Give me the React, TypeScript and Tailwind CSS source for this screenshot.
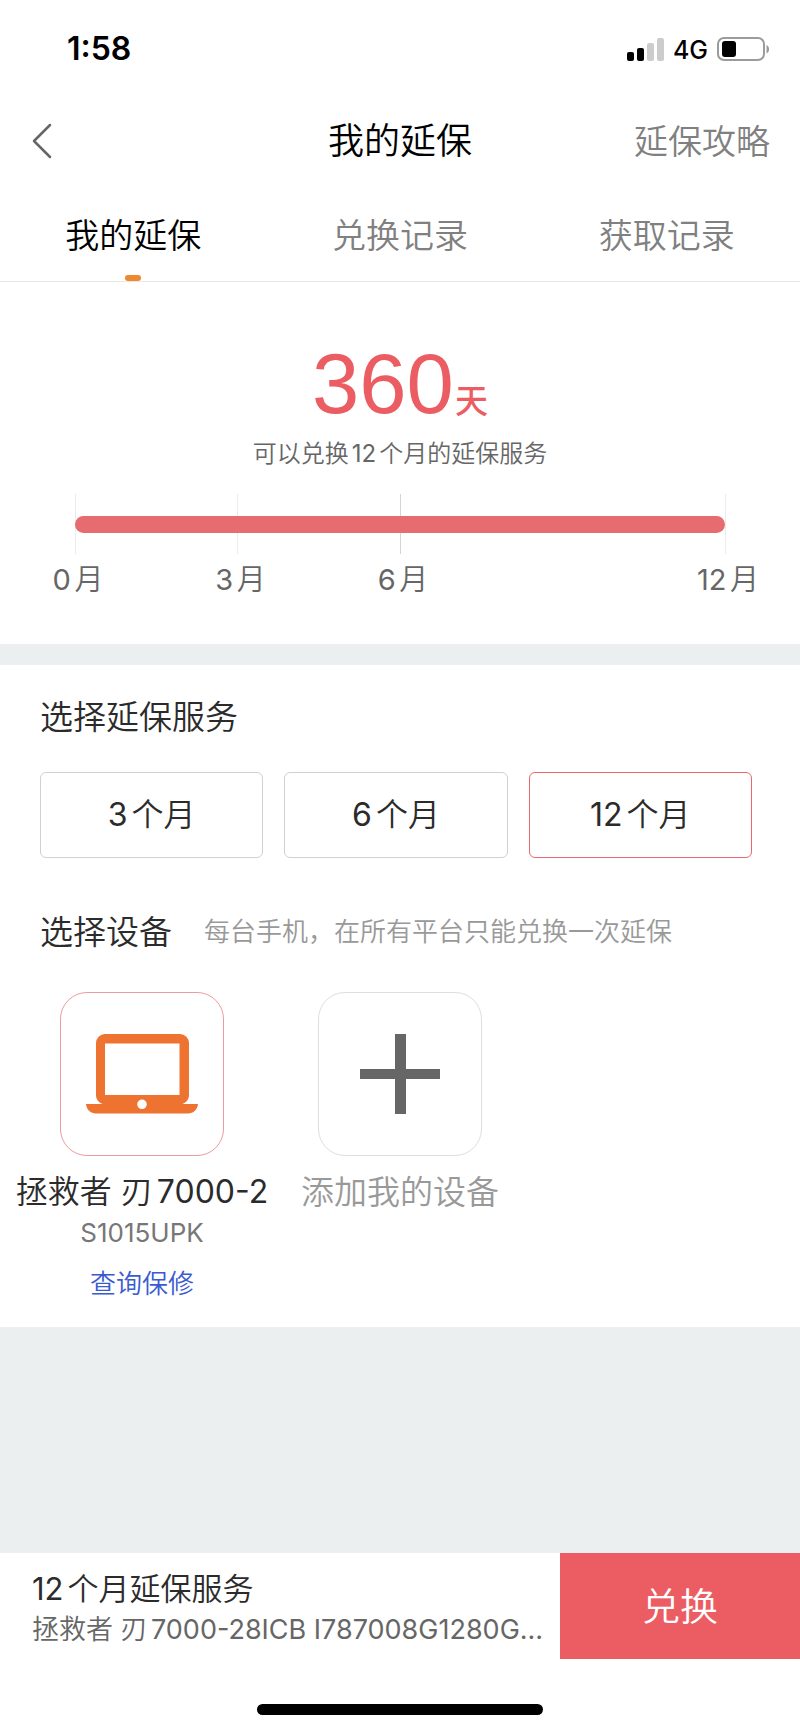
import { useState } from 'react'

const tabs = ['我的延保', '兑换记录', '获取记录']

const marks = [
  { label: '0月', pos: 'justify-self-start', line: 'bg-[#ececec]' },
  { label: '3月', pos: 'justify-self-start', line: 'bg-[#ececec]' },
  { label: '6月', pos: 'justify-self-start', line: 'bg-[#d4d4d4]' },
  { label: '12月', pos: 'justify-self-end', line: 'bg-[#ececec]' }
]

const plans = [3, 6, 12]

function StatusBar() {
  return (
    <div className="h-[98px] shrink-0 pl-[67px] pr-[30px] flex items-center justify-between text-black">
      <span className="text-[32px] font-semibold">1:58</span>
      <div className="flex items-end">
        <svg width="38" height="24" viewBox="0 0 38 24" aria-hidden="true">
          <rect x="1" y="15" width="7" height="9" rx="2" />
          <rect x="11" y="11" width="7" height="13" rx="2" />
          <rect x="21" y="6" width="7" height="18" rx="2" fill="#ccc" />
          <rect x="31" y="1" width="7" height="23" rx="2" fill="#ccc" />
        </svg>
        <span className="ml-[9px] text-[25px] leading-[22px] font-medium">4G</span>
        <svg className="ml-[9px]" width="53" height="24" viewBox="0 0 53 24" aria-hidden="true">
          <rect x="1" y="1" width="46" height="22" rx="6" fill="none" stroke="#9b9b9b" strokeWidth="2" />
          <rect x="5" y="4" width="14" height="16" rx="3" />
          <path d="M49.500 8v8.500c3.500-1.500 3.500-7 0-8.500z" fill="#9b9b9b" />
        </svg>
      </div>
    </div>
  )
}

function LaptopIcon() {
  return (
    <svg width="112" height="80" viewBox="0 0 112 80" aria-hidden="true">
      <path
        fill="#ee7330"
        fillRule="evenodd"
        d="M19 0h75a9 9 0 0 1 9 9v52c0 4-2.500 7.500-6.500 9H112c-.5 5.500-4.500 9.500-10 9.500H10C4.500 79.500.5 75.500 0 70h16.500C12.500 68.500 10 65 10 61V9a9 9 0 0 1 9-9zM19 9.500v51.500h74.500V9.500zM56 65.500a4.800 4.800 0 1 0 0 9.600a4.800 4.800 0 1 0 0-9.600z"
      />
    </svg>
  )
}

export default function App() {
  const [tab, setTab] = useState(0)
  const [plan, setPlan] = useState(12)

  return (
    <div className="min-h-screen flex flex-col bg-white text-[#2b2b2b] font-['Inter','Noto_Sans_CJK_SC_DemiLight','Noto_Sans_CJK_SC',sans-serif] font-normal [text-autospace:normal]">
      <StatusBar />

      <header className="h-[86px] shrink-0 px-[30px] grid grid-cols-3 items-center">
        <button className="justify-self-start" aria-label="返回">
          <svg width="24" height="36" viewBox="0 0 24 36" fill="none" stroke="#666" strokeWidth="2.500" strokeLinecap="round" strokeLinejoin="round">
            <path d="M20 2L4 18l16 16" />
          </svg>
        </button>
        <h1 className="text-center text-[36px] text-black">我的延保</h1>
        <a href="#guide" className="justify-self-end text-[34px] text-[#808080]">延保攻略</a>
      </header>

      <nav className="h-[98px] shrink-0 grid grid-cols-3 border-b border-[#e8e8e8]">
        {tabs.map((t, i) => (
          <button
            key={t}
            onClick={() => setTab(i)}
            className={`flex flex-col items-center justify-between pt-[27px] text-[34px] leading-[50px] ${tab === i ? 'text-black' : 'text-[#808080]'}`}
          >
            {t}
            {tab === i && <span className="w-4 h-[6px] rounded-full bg-[#ee8930]" />}
          </button>
        ))}
      </nav>

      <section className="pt-[60px] pb-[44px]">
        <p className="flex items-baseline justify-center gap-px text-[#eb5d62]">
          <span className="font-['Liberation_Sans',sans-serif] text-[85px] leading-[84px]">360</span>
          <span className="font-['Noto_Sans_CJK_SC',sans-serif] text-[33px] leading-none font-medium">天</span>
        </p>
        <p className="mt-[10px] text-center text-[24px] leading-[36px] text-[#666]">可以兑换12个月的延保服务</p>

        <div className="relative mt-[22px] mx-[75px] grid grid-cols-4">
          {marks.map(m => (
            <div key={m.label} className={`w-0 flex flex-col items-center ${m.pos}`}>
              <span className={`w-px h-[60px] ${m.line}`} />
              <span className="mt-[6px] pl-[6px] text-[29px] leading-[40px] text-[#666] whitespace-nowrap">{m.label}</span>
            </div>
          ))}
          <div className="absolute inset-x-0 top-[22px] h-[17px] rounded-full bg-[#e66c70]" />
        </div>
      </section>

      <div className="h-[21px] shrink-0 bg-[#ebeff0]" />

      <section className="pt-[28px] pb-[23px]">
        <h2 className="px-10 text-[33px] leading-[48px]">选择延保服务</h2>
        <div className="mt-[31px] pl-10 pr-12 grid grid-cols-3 gap-[21px]">
          {plans.map(p => (
            <button
              key={p}
              onClick={() => setPlan(p)}
              aria-pressed={plan === p}
              className={`h-[86px] rounded-md border text-[32px] ${plan === p ? 'border-[#e9676d]' : 'border-[#d0d0d0]'}`}
            >
              {`${p}个月`}
            </button>
          ))}
        </div>

        <div className="mt-[50px] px-10 flex items-center gap-[32px]">
          <h2 className="text-[33px] leading-[48px]">选择设备</h2>
          <p className="text-[26px] leading-[48px] text-[#999]">每台手机，在所有平台只能兑换一次延保</p>
        </div>

        <div className="mt-[36px] px-[13px] grid grid-cols-3">
          <div className="flex flex-col items-center">
            <button className="size-[164px] rounded-[27px] border border-[#ec9aa0] flex items-center justify-center" aria-label="拯救者 刃7000-2">
              <LaptopIcon />
            </button>
            <p className="mt-[12px] text-[32px] leading-[48px] whitespace-nowrap">拯救者 刃7000-2</p>
            <p className="text-[26px] leading-[34px] text-[#777]">S1015UPK</p>
            <a href="#warranty" className="mt-[14px] text-[26px] leading-[40px] text-[#3a5bd0]">查询保修</a>
          </div>
          <div className="flex flex-col items-center">
            <button className="size-[164px] rounded-[27px] border border-[#dedede] flex items-center justify-center" aria-label="添加我的设备">
              <svg width="80" height="80" viewBox="0 0 80 80" fill="#666" aria-hidden="true">
                <path d="M35 0h11v35h34v10H46v35H35V45H0V35h35z" />
              </svg>
            </button>
            <p className="mt-[12px] text-[33px] leading-[48px] whitespace-nowrap text-[#999]">添加我的设备</p>
          </div>
        </div>
      </section>

      <div className="flex-1 bg-[#ebeff0]" />

      <footer className="shrink-0">
        <div className="h-[106px] flex">
          <div className="w-[70%] pl-[32px] pt-[14px]">
            <p className="text-[31px] leading-[44px]">12个月延保服务</p>
            <p className="text-[27px] leading-[38px] text-[#666] whitespace-nowrap">拯救者 刃7000-28ICB I787008G1280G...</p>
          </div>
          <button className="flex-1 bg-[#eb5d62] text-white text-[38px]">兑换</button>
        </div>
        <div className="h-[73px] pt-[45px]">
          <div className="mx-auto w-[286px] h-[11px] rounded-full bg-black" />
        </div>
      </footer>
    </div>
  )
}
